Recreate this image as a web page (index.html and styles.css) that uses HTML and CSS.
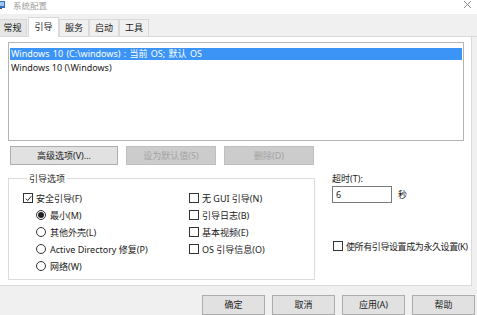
FILE: index.html
```html
<!DOCTYPE html>
<html lang="zh-CN">
<head>
<meta charset="utf-8">
<link rel="stylesheet" href="styles.css">
</head>
<body>
<div class="window">
  <div class="titlebar">
    <svg class="appicon" width="10" height="10" viewBox="0 0 10 10"><rect x="0" y="1" width="9" height="7" fill="#2f6fc0"/><rect x="1" y="2" width="7" height="4" fill="#9cc8f0"/><rect x="3" y="8" width="3" height="1" fill="#555"/></svg>
    <span class="title">系统配置</span>
    <svg class="close" width="9" height="9" viewBox="0 0 9 9"><path d="M1 1L8 8M8 1L1 8" stroke="#8a8a8a" stroke-width="1"/></svg>
  </div>
  <div class="tabs">
    <div class="tab first">常规</div>
    <div class="tab active">引导</div>
    <div class="tab">服务</div>
    <div class="tab">启动</div>
    <div class="tab">工具</div>
  </div>
  <div class="middle">
    <div class="panel">
      <div class="listbox">
        <div class="item selected">Windows 10 (C:\windows) : 当前 OS; 默认 OS</div>
        <div class="item">Windows 10 (\Windows)</div>
      </div>
      <div class="btnrow">
        <div class="btn wide">高级选项(V)...</div>
        <div class="btn disabled">设为默认值(S)</div>
        <div class="btn disabled">删除(D)</div>
      </div>
      <div class="lower">
        <fieldset class="group">
          <legend>引导选项</legend>
          <div class="cols">
            <div class="col left">
              <div class="row"><span class="cb checked"><svg width="7" height="7" viewBox="0 0 7 7"><path d="M0.8 3.6L2.7 5.5L6.3 1.2" fill="none" stroke="#222" stroke-width="1"/></svg></span>安全引导(F)</div>
              <div class="row sub"><span class="rb on"></span>最小(M)</div>
              <div class="row sub"><span class="rb"></span>其他外壳(L)</div>
              <div class="row sub"><span class="rb"></span>Active Directory 修复(P)</div>
              <div class="row sub"><span class="rb"></span>网络(W)</div>
            </div>
            <div class="col right">
              <div class="row"><span class="cb"></span>无 GUI 引导(N)</div>
              <div class="row"><span class="cb"></span>引导日志(B)</div>
              <div class="row"><span class="cb"></span>基本视频(E)</div>
              <div class="row"><span class="cb"></span>OS 引导信息(O)</div>
            </div>
          </div>
        </fieldset>
        <div class="side">
          <div class="timeout-label">超时(T):</div>
          <div class="timeout">
            <div class="input">6</div>
            <span class="sec">秒</span>
          </div>
          <div class="row perm"><span class="cb"></span><span class="tight">使所有引导设置成为永久设置(K)</span></div>
        </div>
      </div>
    </div>
  </div>
  <div class="footer">
    <div class="btn fbtn">确定</div>
    <div class="btn fbtn">取消</div>
    <div class="btn fbtn">应用(A)</div>
    <div class="btn fbtn">帮助</div>
  </div>
</div>
</body>
</html>
```

FILE: styles.css
```css
* { box-sizing: border-box; }
html, body { margin: 0; padding: 0; }
body {
  width: 477px;
  height: 315px;
  overflow: hidden;
  font-family: "Noto Sans", "Noto Sans CJK SC", sans-serif;
  font-size: 9px;
  color: #1a1a1a;
  background: #f0f0f0;
}
.window { width: 477px; height: 315px; display: flex; flex-direction: column; }
.titlebar {
  height: 14px;
  background: #fff;
  display: flex;
  align-items: center;
}
.appicon { margin-left: -4px; margin-top: -3px; }
.title { margin-left: 7px; color: #a0a0a0; font-size: 8.5px; margin-top: -3px; }
.close { margin-left: auto; margin-right: 5px; margin-top: -4px; }
.tabs {
  height: 23px;
  display: flex;
  align-items: flex-end;
  background: #f0f0f0;
  border-bottom: 1px solid #dadada;
}
.tab {
  width: 30px;
  height: 17px;
  line-height: 16px;
  text-align: center;
  border: 1px solid #d9d9d9;
  border-bottom: none;
  background: #f0f0f0;
}
.tab.first { width: 29px; margin-left: -2px; background: #e6e6e6; }
.tab.active {
  height: 20px;
  background: #fff;
  margin-bottom: -1px;
  line-height: 18px;
  width: 31px;
  margin-left: 1px;
}
.middle { height: 251px; display: flex; }
.panel {
  width: 472px;
  background: #fff;
  border-right: 1px solid #dadada;
  border-bottom: 1px solid #dadada;
  padding: 5px 0 0 8px;
}
.listbox {
  width: 456px;
  height: 99px;
  border: 1px solid #b4b4b4;
  padding: 5px 1px 0 1px;
}
.item { height: 12px; line-height: 12px; padding-left: 1px; white-space: nowrap; margin-bottom: 2px; }
.item.selected { background: #3b94f6; color: #fff; word-spacing: 1px; }
.btnrow { display: flex; gap: 8px; margin-top: 5px; padding-left: 2px; }
.btn {
  height: 19px;
  width: 90px;
  line-height: 17px;
  text-align: center;
  background: #e1e1e1;
  border: 1px solid #adadad;
  white-space: nowrap;
}
.btn.wide { width: 108px; }
.btn.disabled { background: #cccccc; border-color: #bfbfbf; color: #a3a3a3; }
.lower { display: flex; margin-top: 7px; }
.group {
  margin: 0;
  padding: 0 0 4px 14px;
  width: 307px;
  border: 1px solid #dcdcdc;
  min-width: 0;
}
.group legend {
  padding: 0 2px;
  margin-left: 4px;
  line-height: 13px;
  color: #2a2a2a;
}
.cols { display: flex; padding-top: 5px; }
.col.left { width: 166px; }
.row {
  height: 17px;
  display: flex;
  align-items: center;
  white-space: nowrap;
}
.row.sub { padding-left: 13px; }
.cb {
  width: 10px;
  height: 10px;
  border: 1px solid #333;
  background: #fff;
  margin-right: 3px;
  display: flex;
  align-items: center;
  justify-content: center;
  flex: none;
}
.rb {
  width: 10px;
  height: 10px;
  border: 1px solid #333;
  border-radius: 50%;
  background: #fff;
  margin-right: 4px;
  display: flex;
  align-items: center;
  justify-content: center;
  flex: none;
}
.rb.on::after {
  content: "";
  width: 6px;
  height: 6px;
  border-radius: 50%;
  background: #222;
}
.side { margin-left: 17px; display: flex; flex-direction: column; }
.timeout-label { line-height: 13px; }
.timeout { display: flex; align-items: center; margin-top: 1px; }
.input {
  width: 60px;
  height: 17px;
  border: 1px solid #7a7a7a;
  background: #fff;
  padding-left: 3px;
  line-height: 15px;
}
.sec { margin-left: 6px; }
.row.perm { margin-top: 35px; padding-left: 1px; }
.tight { letter-spacing: -0.4px; }
.footer {
  flex: 1;
  display: flex;
  justify-content: flex-end;
  gap: 7px;
  padding: 9px 2px 0 0;
}
.fbtn { width: 63px; height: 20px; }
```
